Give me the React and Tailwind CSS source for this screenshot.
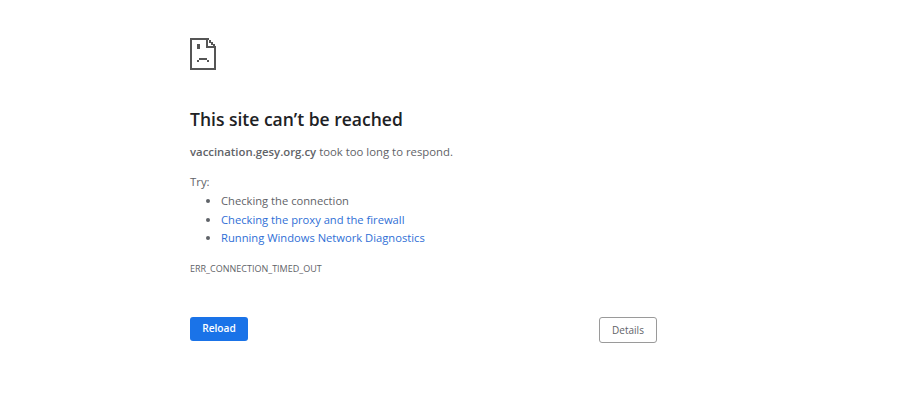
export default function App() {
  return (
    <div className="h-[401px] w-[900px] bg-white overflow-hidden" style={{ fontFamily: '"Open Sans", "Noto Sans", sans-serif' }}>
      <div className="ml-[190px] w-[467px] pt-[38px] flex flex-col">
        <svg width="26" height="32" viewBox="0 0 26 32" className="block">
          <g fill="#555">
            <path d="M0 0H17V2H2V30H24V10H26V32H0Z" />
            <path d="M16 0H19V2H21V4H23V6H25V8H26V10H16ZM18 2V8H23V7H21V5H19V2Z" fillRule="evenodd" />
            <rect x="7" y="6" width="3" height="5" />
            <rect x="9" y="20" width="8" height="2" />
            <rect x="7" y="22" width="2" height="2" />
            <rect x="17" y="22" width="2" height="2" />
          </g>
        </svg>
        <h1 className="mt-[36px] text-[17.5px] leading-[26px] font-semibold text-[#202124]">This site can’t be reached</h1>
        <p className="mt-[10px] text-[11.35px] leading-[20px] text-[#5f6368]"><b className="font-semibold">vaccination.gesy.org.cy</b> took too long to respond.</p>
        <p className="mt-[10px] text-[11.35px] leading-[20px] text-[#5f6368]">Try:</p>
        <ul className="list-disc pl-[31px] text-[11.2px] leading-[18.7px] text-[#5f6368]">
          <li>Checking the connection</li>
          <li className="marker:text-[#5f6368] text-[#2f6fd6]">Checking the proxy and the firewall</li>
          <li className="marker:text-[#5f6368] text-[#2f6fd6]">Running Windows Network Diagnostics</li>
        </ul>
        <p className="mt-[14px] text-[9px] leading-[14px] text-[#5f6368]">ERR_CONNECTION_TIMED_OUT</p>
        <div className="mt-[41px] flex items-start justify-between">
          <button className="h-[24px] w-[58px] rounded-[3px] bg-[#1a73e8] text-white text-[10.2px] font-semibold">Reload</button>
          <button className="h-[26px] w-[58px] rounded-[3px] border border-[#9a9a9a] bg-white text-[#5f6368] text-[10px] font-medium">Details</button>
        </div>
      </div>
    </div>
  );
}
